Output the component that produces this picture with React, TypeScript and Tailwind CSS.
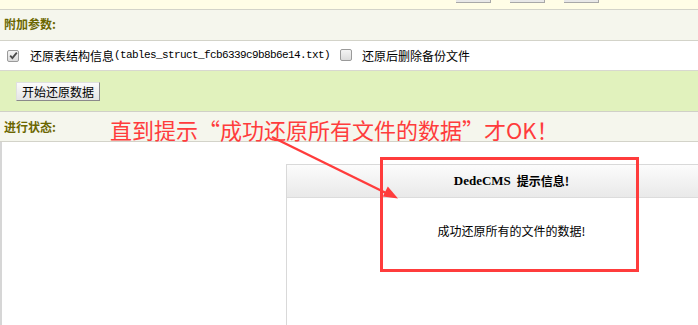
import React from "react";

const cjk = "font-['Noto_Sans_CJK_SC','Noto_Sans',sans-serif]";

function Check({ checked }: { checked?: boolean }) {
  return (
    <span className="inline-flex h-[12px] w-[12px] items-center justify-center rounded-[2px] border border-[#9a9a9a] bg-gradient-to-b from-[#f4f4f4] to-[#dcdcdc]">
      {checked && (
        <svg width="9" height="9" viewBox="0 0 9 9">
          <path d="M1.2 4.6 L3.4 7 L7.8 1.6" fill="none" stroke="#4a4a4a" strokeWidth="1.8" />
        </svg>
      )}
    </span>
  );
}

export default function App() {
  return (
    <div className={`relative h-[325px] w-[698px] overflow-hidden bg-white text-[12px] text-black ${cjk}`}>
      {/* top strip with cut-off buttons */}
      <div className="flex h-[10px] gap-[19px] border-b border-[#d3d3c9] bg-[#fffde6] pl-[456px]">
        <div className="h-[3px] w-[35px] border-r border-b border-[#a8a8a8] bg-[#e8e8e8]" />
        <div className="h-[3px] w-[35px] border-r border-b border-[#a8a8a8] bg-[#e8e8e8]" />
        <div className="h-[3px] w-[35px] border-r border-b border-[#a8a8a8] bg-[#e8e8e8]" />
      </div>

      {/* 附加参数 */}
      <div className="flex h-[31px] items-center border-b border-[#d3d3c9] bg-[#f5f6ed] pb-[3px] pl-[4px] text-[12px] font-bold text-[#6b6600]">
        附加参数:
      </div>

      {/* options */}
      <div className="flex h-[30px] items-center border-b border-[#d8d8d0] bg-white pl-[7px]">
        <Check checked />
        <span className="ml-[11px]">还原表结构信息</span>
        <span className="font-['Liberation_Mono',monospace] text-[11px] tracking-[-0.6px]">
          (tables_struct_fcb6339c9b8b6e14.txt)
        </span>
        <span className="ml-[10px]">
          <Check />
        </span>
        <span className="ml-[10px]">还原后删除备份文件</span>
      </div>

      {/* action */}
      <div className="flex h-[41px] items-center border-b border-[#d0d0c8] bg-[#e1f2bd] pl-[16px]">
        <button className="mt-[1px] flex h-[19px] w-[84px] items-center justify-center border border-t-[#e0e0e0] border-l-[#e0e0e0] border-r-[#8a8a8a] border-b-[#8a8a8a] bg-gradient-to-b from-[#fbfbfb] to-[#e4e4e4] text-[12px] leading-none text-black">
          开始还原数据
        </button>
      </div>

      {/* 进行状态 */}
      <div className="flex h-[30px] items-center border-b border-[#d3d3c9] bg-[#f5f6ed] pl-[4px] text-[12px] font-bold text-[#6b6600]">
        进行状态:
      </div>

      {/* status area */}
      <div className="h-[200px] border-l-2 border-[#d6d6d6] pt-[22px] pl-[284px]">
        <div className="h-[200px] w-[450px] border-t border-l border-[#d9d9d9]">
          <div className="flex h-[33px] items-center justify-center border-b border-[#dcdcdc] bg-gradient-to-b from-[#fcfcfc] to-[#e9e9e9] pb-[1px] text-[12px] font-bold text-black">
            <span className="font-['Liberation_Serif',serif] text-[13px]">DedeCMS</span>
            <span className="ml-[6px]">提示信息!</span>
          </div>
          <div className="flex justify-center pt-[24px] text-[12px] text-black">
            成功还原所有的文件的数据!
          </div>
        </div>
      </div>

      {/* annotations */}
      <div className="absolute left-[110px] top-[114px] text-[22px] leading-[30px] text-[#ff3c3c]">
        直到提示“成功还原所有文件的数据”才OK！
      </div>
      <div className="absolute left-[380px] top-[157px] h-[115px] w-[259px] border-[3px] border-[#ff3c3c]" />
      <svg className="absolute left-0 top-0" width="698" height="325">
        <line x1="272" y1="137" x2="388" y2="194" stroke="#ff3c3c" strokeWidth="2.5" />
        <polygon points="398,198.5 382.8,196.6 387.8,186.4" fill="#ff3c3c" />
      </svg>
    </div>
  );
}
